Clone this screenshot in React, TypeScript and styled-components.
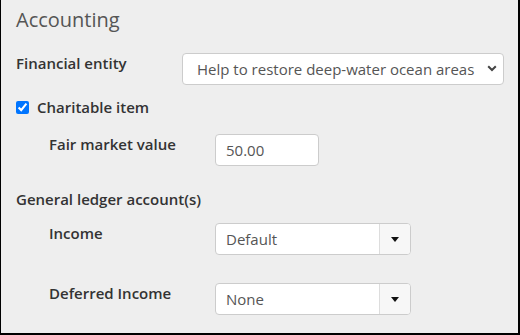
import styled, { createGlobalStyle } from "styled-components";

const GlobalStyle = createGlobalStyle`
  html, body {
    margin: 0;
    padding: 0;
    background: #eeeeee;
  }
  body {
    font-family: "Open Sans", "Noto Sans", sans-serif;
  }
`;

const Panel = styled.div`
  box-sizing: border-box;
  width: 520px;
  height: 335px;
  padding: 8px 16px 0 15px;
  background: #eeeeee;
  border-left: 1px solid #000;
  border-right: 2px solid #000;
  border-bottom: 2px solid #000;
  color: #333;
`;

const Heading = styled.h2`
  margin: 0 0 21px;
  font-size: 20px;
  line-height: 24px;
  font-weight: 400;
  color: #555;
`;

const Row = styled.div<{ $indent?: boolean; $gap: number }>`
  display: grid;
  grid-template-columns: 166px auto;
  justify-content: start;
  align-items: start;
  margin-left: ${(p) => (p.$indent ? "33px" : "0")};
  margin-bottom: ${(p) => p.$gap}px;
`;

const Label = styled.div<{ $gap?: number }>`
  font-size: 15px;
  line-height: 20px;
  font-weight: 600;
  color: #333;
  margin-bottom: ${(p) => p.$gap ?? 0}px;
`;

const CheckRow = styled.label<{ $gap: number }>`
  display: flex;
  align-items: center;
  gap: 8px;
  height: 20px;
  margin-bottom: ${(p) => p.$gap}px;
  font-size: 15px;
  font-weight: 600;
  color: #333;
  input {
    margin: 0;
    width: 13px;
    height: 13px;
    accent-color: #0075ff;
  }
`;

const SelectWrap = styled.div`
  position: relative;
  width: 322px;
`;

const Select = styled.select`
  appearance: none;
  box-sizing: border-box;
  width: 100%;
  height: 32px;
  padding: 0 24px 0 14px;
  border: 1px solid #cccccc;
  border-radius: 4px;
  background: #fff;
  font-family: inherit;
  font-size: 15px;
  color: #555;
  outline: none;
`;

const Chevron = styled.svg`
  position: absolute;
  right: 7px;
  top: 12px;
  pointer-events: none;
`;

const TextInput = styled.input`
  box-sizing: border-box;
  width: 104px;
  height: 32px;
  padding: 0 10px;
  border: 1px solid #cccccc;
  border-radius: 4px;
  background: #fff;
  font-family: inherit;
  font-size: 15px;
  color: #555;
  outline: none;
`;

const Combo = styled.div`
  box-sizing: border-box;
  display: flex;
  width: 196px;
  height: 32px;
  border: 1px solid #cccccc;
  border-radius: 4px;
  background: #fff;
  overflow: hidden;
`;

const ComboValue = styled.div`
  flex: 1;
  display: flex;
  align-items: center;
  padding: 0 10px;
  font-size: 15px;
  color: #555;
`;

const ComboButton = styled.div`
  width: 30px;
  display: flex;
  align-items: center;
  justify-content: center;
  border-left: 1px solid #dddddd;
  background: #f7f7f7;
  &::after {
    content: "";
    border-left: 4px solid transparent;
    border-right: 4px solid transparent;
    border-top: 5px solid #111;
    margin-top: 1px;
  }
`;

const ComboBox = ({ value }: { value: string }) => (
  <Combo>
    <ComboValue>{value}</ComboValue>
    <ComboButton />
  </Combo>
);

export default function App() {
  return (
    <Panel>
      <GlobalStyle />
      <Heading>Accounting</Heading>
      <Row $gap={12}>
        <Label>Financial entity</Label>
        <SelectWrap>
          <Select defaultValue="ocean">
            <option value="ocean">Help to restore deep-water ocean areas</option>
          </Select>
          <Chevron width="10" height="7" viewBox="0 0 10 7">
            <path d="M1.2 1.2 L5 5 L8.8 1.2" fill="none" stroke="#444" strokeWidth="2" />
          </Chevron>
        </SelectWrap>
      </Row>
      <CheckRow $gap={17}>
        <input type="checkbox" defaultChecked />
        Charitable item
      </CheckRow>
      <Row $indent $gap={23}>
        <Label>Fair market value</Label>
        <TextInput defaultValue="50.00" />
      </Row>
      <Label $gap={14}>General ledger account(s)</Label>
      <Row $indent $gap={28}>
        <Label>Income</Label>
        <ComboBox value="Default" />
      </Row>
      <Row $indent $gap={0}>
        <Label>Deferred Income</Label>
        <ComboBox value="None" />
      </Row>
    </Panel>
  );
}
